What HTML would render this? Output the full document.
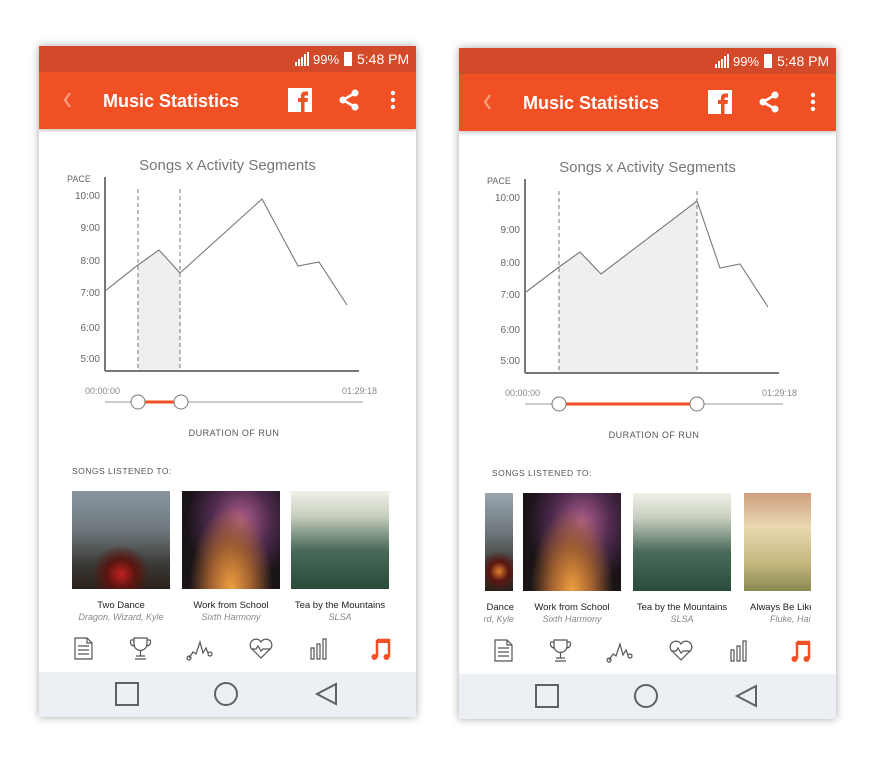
<!DOCTYPE html>
<html><head><meta charset="utf-8">
<style>
*{margin:0;padding:0;box-sizing:border-box}
body{width:876px;height:765px;background:#fff;position:relative;overflow:hidden;font-family:"Liberation Sans",sans-serif}
.ph{position:absolute;width:377px;height:671px;background:#fff;box-shadow:0 0 8px rgba(0,0,0,.35);overflow:hidden}
.sb{position:absolute;left:0;top:0;width:377px;height:26px;background:#d24a2a;color:#fff;font-size:13px}
.ab{position:absolute;left:0;top:26px;width:377px;height:57px;background:#f05024;box-shadow:0 2px 3px rgba(0,0,0,.2)}
.t{position:absolute;white-space:nowrap}
.th{position:absolute;top:445px;width:98px;height:98px}
.nm{position:absolute;top:554px;font-size:9.5px;color:#222;text-align:center;width:110px;white-space:nowrap}
.ar{position:absolute;top:566px;font-size:9px;color:#888;font-style:italic;text-align:center;width:110px;white-space:nowrap}
.nb{position:absolute;left:0;top:626px;width:377px;height:45px;background:#eceff3}
</style></head><body>

<!-- LEFT PHONE -->
<div class="ph" style="left:39px;top:46px">
 <div class="sb">
  <svg class="t" style="left:256px;top:6px" width="15" height="14"><rect x="0" y="10" width="2" height="4" fill="#fff"/><rect x="3" y="7" width="2" height="7" fill="#fff"/><rect x="6" y="5" width="2" height="9" fill="#fff"/><rect x="9" y="2" width="2" height="12" fill="#fff"/><rect x="12" y="0" width="2" height="14" fill="#fff"/></svg>
  <span class="t" style="left:274px;top:6px">99%</span>
  <div class="t" style="left:305px;top:6px;width:8px;height:14px;background:#fff"></div>
  <span class="t" style="left:318px;top:5px;font-size:14px">5:48 PM</span>
 </div>
 <div class="ab">
  <svg class="t" style="left:22px;top:19px" width="12" height="18"><path d="M9 2L4 9l5 7" fill="none" stroke="#f8a07c" stroke-width="2.2"/></svg>
  <span class="t" style="left:64px;top:19px;color:#fff;font-size:18px;font-weight:bold">Music Statistics</span>
  <svg class="t" style="left:249px;top:16px" width="24" height="24"><rect width="24" height="24" fill="#fff"/><path d="M13 24V14h-3v-4h3V7.5C13 5 14.5 3.5 17 3.5h3v4h-2.3c-.9 0-1.2.4-1.2 1.2V10H20l-.5 4h-3v10z" fill="#f05024"/></svg>
  <svg class="t" style="left:298px;top:16px" width="24" height="24"><line x1="18" y1="5" x2="6" y2="12" stroke="#fff" stroke-width="2.5"/><line x1="18" y1="19" x2="6" y2="12" stroke="#fff" stroke-width="2.5"/><circle cx="18" cy="5" r="3.5" fill="#fff"/><circle cx="18" cy="19" r="3.5" fill="#fff"/><circle cx="6" cy="12" r="3.5" fill="#fff"/></svg>
  <svg class="t" style="left:351px;top:18px" width="6" height="20"><circle cx="3" cy="3" r="2.2" fill="#fff"/><circle cx="3" cy="10" r="2.2" fill="#fff"/><circle cx="3" cy="17" r="2.2" fill="#fff"/></svg>
 </div>
 <span class="t" style="left:0;width:377px;text-align:center;top:111px;font-size:15px;color:#777">Songs x Activity Segments</span>
 <svg class="t" style="left:0;top:0" width="377" height="440" font-family="Liberation Sans" font-size="10" fill="#666">
  <polygon points="99,219 120,204 141,227 141,324 99,324" fill="#eeefef"/>
  <line x1="99" y1="143" x2="99" y2="324" stroke="#777" stroke-dasharray="4,3"/>
  <line x1="141" y1="143" x2="141" y2="324" stroke="#777" stroke-dasharray="4,3"/>
  <polyline points="66,245 99,219 120,204 141,227 223,153 259,220 280,216 308,259" fill="none" stroke="#777" stroke-width="1.1"/>
  <line x1="66" y1="131" x2="66" y2="325" stroke="#777" stroke-width="2"/>
  <line x1="66" y1="325" x2="320" y2="325" stroke="#777" stroke-width="2"/>
  <text x="28" y="136" font-size="9">PACE</text>
  <g text-anchor="end"><text x="61" y="153">10:00</text><text x="61" y="185">9:00</text><text x="61" y="218">8:00</text><text x="61" y="250">7:00</text><text x="61" y="285">6:00</text><text x="61" y="316">5:00</text></g>
  <text x="46" y="348" font-size="9" fill="#888">00:00:00</text>
  <text x="338" y="348" font-size="9" fill="#888" text-anchor="end">01:29:18</text>
  <line x1="66" y1="356" x2="324" y2="356" stroke="#bbb" stroke-width="1.5"/>
  <line x1="99" y1="356" x2="142" y2="356" stroke="#f05024" stroke-width="3"/>
  <circle cx="99" cy="356" r="7" fill="#fff" stroke="#777"/><circle cx="142" cy="356" r="7" fill="#fff" stroke="#777"/>
  <text x="195" y="390" font-size="9" text-anchor="middle" fill="#555" letter-spacing=".5">DURATION OF RUN</text>
  <text x="33" y="428" font-size="8.5" fill="#555" letter-spacing=".5">SONGS LISTENED TO:</text>
 </svg>
 <div class="th" style="left:33px;background:radial-gradient(circle at 50% 85%,#c02020 0,#5a1510 15%,transparent 30%),linear-gradient(180deg,#8a95a0,#6e777c 40%,#3a3a35 75%,#2a201a)"></div>
 <div class="th" style="left:143px;background:radial-gradient(ellipse at 50% 100%,#f0a040 0,#a06030 30%,transparent 60%),radial-gradient(ellipse at 60% 30%,#b06090 0,#502a50 35%,transparent 65%),#1a1418"></div>
 <div class="th" style="left:252px;background:linear-gradient(180deg,#f2f0e8 0,#c8d0c0 25%,#4a6a5a 60%,#2a4a3a)"></div>
 <div class="nm" style="left:27px">Two Dance</div><div class="ar" style="left:27px">Dragon, Wizard, Kyle</div>
 <div class="nm" style="left:137px">Work from School</div><div class="ar" style="left:137px">Sixth Harmony</div>
 <div class="nm" style="left:246px">Tea by the Mountains</div><div class="ar" style="left:246px">SLSA</div>
 <svg class="t" style="left:0;top:588px" width="377" height="30" fill="none" stroke="#555" stroke-width="1.2">
  <path d="M36 4h12l5 5v16H36z M48 4v5h5 M39 12h11 M39 16h11 M39 20h11"/>
  <path d="M95 4h13v6a6.5 6.5 0 0 1-13 0z M95 6h-3a4 4 0 0 0 4 6 M108 6h3a4 4 0 0 1-4 6 M101.5 17v5 M97 22h9 M96 25h11"/>
  <path d="M150 24l4-6 3 2 4-12 3 11 3-5 2 5" /><circle cx="150" cy="24" r="2"/><circle cx="171" cy="20" r="2"/>
  <path d="M222 24l-10-10a5.5 5.5 0 0 1 10-6a5.5 5.5 0 0 1 10 6z M212 15h5l2-3 3 5 2-2h8"/>
  <path d="M272 14h3v11h-3z M278 10h3v15h-3z M284 5h3v20h-3z"/>
  <path d="M338 6h12v17 M338 6v17" stroke="#f05024" stroke-width="2.5"/><rect x="338" y="5" width="12" height="4" fill="#f05024" stroke="none"/><circle cx="335.5" cy="23" r="3" fill="#f05024" stroke="none"/><circle cx="347.5" cy="23" r="3" fill="#f05024" stroke="none"/>
 </svg>
 <div class="nb">
  <svg width="377" height="45"><rect x="77" y="11" width="22" height="22" fill="none" stroke="#5b6268" stroke-width="2"/><circle cx="187" cy="22" r="11" fill="none" stroke="#5b6268" stroke-width="2"/><path d="M297 12L278 22 297 32z" fill="none" stroke="#5b6268" stroke-width="2"/></svg>
 </div>
</div>

<!-- RIGHT PHONE -->
<div class="ph" style="left:459px;top:48px">
 <div class="sb">
  <svg class="t" style="left:256px;top:6px" width="15" height="14"><rect x="0" y="10" width="2" height="4" fill="#fff"/><rect x="3" y="7" width="2" height="7" fill="#fff"/><rect x="6" y="5" width="2" height="9" fill="#fff"/><rect x="9" y="2" width="2" height="12" fill="#fff"/><rect x="12" y="0" width="2" height="14" fill="#fff"/></svg>
  <span class="t" style="left:274px;top:6px">99%</span>
  <div class="t" style="left:305px;top:6px;width:8px;height:14px;background:#fff"></div>
  <span class="t" style="left:318px;top:5px;font-size:14px">5:48 PM</span>
 </div>
 <div class="ab">
  <svg class="t" style="left:22px;top:19px" width="12" height="18"><path d="M9 2L4 9l5 7" fill="none" stroke="#f8a07c" stroke-width="2.2"/></svg>
  <span class="t" style="left:64px;top:19px;color:#fff;font-size:18px;font-weight:bold">Music Statistics</span>
  <svg class="t" style="left:249px;top:16px" width="24" height="24"><rect width="24" height="24" fill="#fff"/><path d="M13 24V14h-3v-4h3V7.5C13 5 14.5 3.5 17 3.5h3v4h-2.3c-.9 0-1.2.4-1.2 1.2V10H20l-.5 4h-3v10z" fill="#f05024"/></svg>
  <svg class="t" style="left:298px;top:16px" width="24" height="24"><line x1="18" y1="5" x2="6" y2="12" stroke="#fff" stroke-width="2.5"/><line x1="18" y1="19" x2="6" y2="12" stroke="#fff" stroke-width="2.5"/><circle cx="18" cy="5" r="3.5" fill="#fff"/><circle cx="18" cy="19" r="3.5" fill="#fff"/><circle cx="6" cy="12" r="3.5" fill="#fff"/></svg>
  <svg class="t" style="left:351px;top:18px" width="6" height="20"><circle cx="3" cy="3" r="2.2" fill="#fff"/><circle cx="3" cy="10" r="2.2" fill="#fff"/><circle cx="3" cy="17" r="2.2" fill="#fff"/></svg>
 </div>
 <span class="t" style="left:0;width:377px;text-align:center;top:111px;font-size:15px;color:#777">Songs x Activity Segments</span>
 <svg class="t" style="left:0;top:0" width="377" height="440" font-family="Liberation Sans" font-size="10" fill="#666">
  <polygon points="100,219 121,204 142,226 238,153 238,324 100,324" fill="#eeefef"/>
  <line x1="100" y1="143" x2="100" y2="324" stroke="#777" stroke-dasharray="4,3"/>
  <line x1="238" y1="143" x2="238" y2="324" stroke="#777" stroke-dasharray="4,3"/>
  <polyline points="67,244 100,219 121,204 142,226 238,153 261,220 281,216 309,259" fill="none" stroke="#777" stroke-width="1.1"/>
  <line x1="66" y1="131" x2="66" y2="325" stroke="#777" stroke-width="2"/>
  <line x1="66" y1="325" x2="320" y2="325" stroke="#777" stroke-width="2"/>
  <text x="28" y="136" font-size="9">PACE</text>
  <g text-anchor="end"><text x="61" y="153">10:00</text><text x="61" y="185">9:00</text><text x="61" y="218">8:00</text><text x="61" y="250">7:00</text><text x="61" y="285">6:00</text><text x="61" y="316">5:00</text></g>
  <text x="46" y="348" font-size="9" fill="#888">00:00:00</text>
  <text x="338" y="348" font-size="9" fill="#888" text-anchor="end">01:29:18</text>
  <line x1="66" y1="356" x2="324" y2="356" stroke="#bbb" stroke-width="1.5"/>
  <line x1="100" y1="356" x2="238" y2="356" stroke="#f05024" stroke-width="3"/>
  <circle cx="100" cy="356" r="7" fill="#fff" stroke="#777"/><circle cx="238" cy="356" r="7" fill="#fff" stroke="#777"/>
  <text x="195" y="390" font-size="9" text-anchor="middle" fill="#555" letter-spacing=".5">DURATION OF RUN</text>
  <text x="33" y="428" font-size="8.5" fill="#555" letter-spacing=".5">SONGS LISTENED TO:</text>
 </svg>
 <div class="th" style="left:26px;width:28px;background:radial-gradient(circle at 50% 80%,#e08030 0,#5a1510 12%,transparent 25%),linear-gradient(180deg,#9aa5b0,#6e777c 40%,#3a3a35 75%,#2a201a)"></div>
 <div class="th" style="left:64px;background:radial-gradient(ellipse at 50% 100%,#f0a040 0,#a06030 30%,transparent 60%),radial-gradient(ellipse at 60% 30%,#b06090 0,#502a50 35%,transparent 65%),#1a1418"></div>
 <div class="th" style="left:174px;background:linear-gradient(180deg,#f2f0e8 0,#c8d0c0 25%,#4a6a5a 60%,#2a4a3a)"></div>
 <div class="th" style="left:285px;width:67px;background:linear-gradient(180deg,#d0a080 0,#e8d8b0 35%,#c8b880 70%,#8a8a50)"></div>
 <div class="nm" style="left:-55px;width:110px;text-align:right;clip-path:inset(0 0 0 83px)">Two Dance</div><div class="ar" style="left:-55px;text-align:right;clip-path:inset(0 0 0 80px)">Dragon, Wizard, Kyle</div>
 <div class="nm" style="left:58px">Work from School</div><div class="ar" style="left:58px">Sixth Harmony</div>
 <div class="nm" style="left:168px">Tea by the Mountains</div><div class="ar" style="left:168px">SLSA</div>
 <div class="nm" style="left:291px;width:61px;text-align:left;overflow:hidden">Always Be Like</div><div class="ar" style="left:311px;width:41px;text-align:left;overflow:hidden">Fluke, Hai</div>
 <svg class="t" style="left:0;top:588px" width="377" height="30" fill="none" stroke="#555" stroke-width="1.2">
  <path d="M36 4h12l5 5v16H36z M48 4v5h5 M39 12h11 M39 16h11 M39 20h11"/>
  <path d="M95 4h13v6a6.5 6.5 0 0 1-13 0z M95 6h-3a4 4 0 0 0 4 6 M108 6h3a4 4 0 0 1-4 6 M101.5 17v5 M97 22h9 M96 25h11"/>
  <path d="M150 24l4-6 3 2 4-12 3 11 3-5 2 5" /><circle cx="150" cy="24" r="2"/><circle cx="171" cy="20" r="2"/>
  <path d="M222 24l-10-10a5.5 5.5 0 0 1 10-6a5.5 5.5 0 0 1 10 6z M212 15h5l2-3 3 5 2-2h8"/>
  <path d="M272 14h3v11h-3z M278 10h3v15h-3z M284 5h3v20h-3z"/>
  <path d="M338 6h12v17 M338 6v17" stroke="#f05024" stroke-width="2.5"/><rect x="338" y="5" width="12" height="4" fill="#f05024" stroke="none"/><circle cx="335.5" cy="23" r="3" fill="#f05024" stroke="none"/><circle cx="347.5" cy="23" r="3" fill="#f05024" stroke="none"/>
 </svg>
 <div class="nb">
  <svg width="377" height="45"><rect x="77" y="11" width="22" height="22" fill="none" stroke="#5b6268" stroke-width="2"/><circle cx="187" cy="22" r="11" fill="none" stroke="#5b6268" stroke-width="2"/><path d="M297 12L278 22 297 32z" fill="none" stroke="#5b6268" stroke-width="2"/></svg>
 </div>
</div>
</body></html>
